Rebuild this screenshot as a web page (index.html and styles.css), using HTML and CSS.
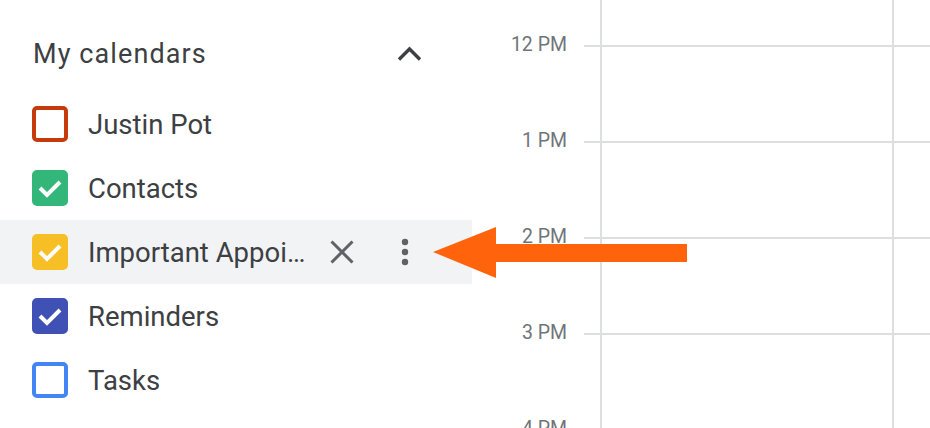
FILE: index.html
```html
<!DOCTYPE html>
<html lang="en">
<head>
  <meta charset="UTF-8" />
  <meta name="viewport" content="width=device-width, initial-scale=1.0"/>
  <title>My calendars</title>
  <link rel="stylesheet" href="styles.css">
</head>
<body>
  <div class="app">
    <aside class="sidebar">
      <div class="section-head">
        <span class="section-title">My calendars</span>
        <button class="icon-btn" aria-label="Collapse">
          <svg width="26" height="16" viewBox="0 0 26 16">
            <polyline points="2,13.5 12.5,3 23,13.5" fill="none" stroke="#3c4043" stroke-width="3.4"/>
          </svg>
        </button>
      </div>

      <ul class="cal-list">
        <li class="cal-item">
          <span class="box" style="border-color:#c53b0b"></span>
          <span class="cal-name">Justin Pot</span>
        </li>
        <li class="cal-item">
          <span class="box checked" style="background:#33b679;border-color:#33b679">
            <svg viewBox="0 0 36 36"><polyline points="8,18 15,25 28,12"/></svg>
          </span>
          <span class="cal-name">Contacts</span>
        </li>
        <li class="cal-item hover">
          <span class="box checked" style="background:#f6bf26;border-color:#f6bf26">
            <svg viewBox="0 0 36 36"><polyline points="8,18 15,25 28,12"/></svg>
          </span>
          <span class="cal-name">Important Appointments</span>
          <button class="icon-btn" aria-label="Unsubscribe">
            <svg width="24" height="24" viewBox="0 0 24 24">
              <path d="M1.5 1.5 L22.5 22.5 M22.5 1.5 L1.5 22.5" stroke="#5f6368" stroke-width="3" fill="none"/>
            </svg>
          </button>
          <button class="icon-btn" aria-label="Options">
            <svg width="8" height="28" viewBox="0 0 8 28">
              <circle cx="4" cy="4" r="3.2" fill="#5f6368"/>
              <circle cx="4" cy="14" r="3.2" fill="#5f6368"/>
              <circle cx="4" cy="24" r="3.2" fill="#5f6368"/>
            </svg>
          </button>
        </li>
        <li class="cal-item">
          <span class="box checked" style="background:#3f51b5;border-color:#3f51b5">
            <svg viewBox="0 0 36 36"><polyline points="8,18 15,25 28,12"/></svg>
          </span>
          <span class="cal-name">Reminders</span>
        </li>
        <li class="cal-item">
          <span class="box" style="border-color:#4285f4"></span>
          <span class="cal-name">Tasks</span>
        </li>
      </ul>
    </aside>

    <main class="calendar">
      <div class="hours">
        <div class="hour"><span class="hour-label">12 PM</span><span class="slot"></span></div>
        <div class="hour"><span class="hour-label">1 PM</span><span class="slot"></span></div>
        <div class="hour"><span class="hour-label">2 PM</span><span class="slot"></span></div>
        <div class="hour"><span class="hour-label">3 PM</span><span class="slot"></span></div>
        <div class="hour"><span class="hour-label">4 PM</span><span class="slot"></span></div>
      </div>
      <div class="days">
        <div class="day"></div>
        <div class="day"></div>
      </div>
    </main>
  </div>

  <!-- annotation arrow -->
  <svg class="arrow" width="256" height="54" viewBox="0 0 256 54">
    <polygon points="1,26 64,1 64,18 255,18 255,36 64,36 64,52" fill="#ff640c"/>
  </svg>
</body>
</html>
```

FILE: styles.css
```css
:root {
  --text: #3c4043;
  --muted: #70757a;
  --icon: #5f6368;
  --line: #dddee0;
  --hover: #f1f3f4;
  --font: Roboto, 'Liberation Sans', sans-serif;
}

* {
  box-sizing: border-box;
}

body {
  margin: 0;
  background: #fff;
  font-family: var(--font);
  color: var(--text);
  overflow: hidden;
  height: 428px;
}

.app {
  display: flex;
  height: 100%;
}

/* sidebar */
.sidebar {
  width: 472px;
  flex-shrink: 0;
  padding-top: 22px;
}

.section-head {
  display: flex;
  align-items: center;
  justify-content: space-between;
  height: 64px;
  padding: 0 38px 0 33px;
  margin-bottom: 6px;
}

.section-title {
  font-size: 27px;
  font-weight: 400;
  letter-spacing: 1.1px;
}

.icon-btn {
  width: 48px;
  height: 48px;
  border: none;
  background: none;
  padding: 0;
  display: flex;
  align-items: center;
  justify-content: center;
  cursor: pointer;
  flex-shrink: 0;
}

.cal-list {
  list-style: none;
  margin: 0;
  padding: 0;
}

.cal-item {
  display: flex;
  align-items: center;
  height: 64px;
  padding: 0 43px 0 32px;
}

.cal-item.hover {
  background: var(--hover);
}

.box {
  width: 36px;
  height: 36px;
  border: 4px solid;
  border-radius: 5px;
  flex-shrink: 0;
  position: relative;
}

.box svg {
  position: absolute;
  top: -4px;
  left: -4px;
  width: 36px;
  height: 36px;
}

.box polyline {
  fill: none;
  stroke: #fff;
  stroke-width: 4;
}

.cal-name {
  flex: 1;
  margin-left: 20px;
  font-size: 27.5px;
  white-space: nowrap;
  overflow: hidden;
  text-overflow: ellipsis;
}

.cal-item.hover .icon-btn + .icon-btn {
  margin-left: 15px;
}

/* day view */
.calendar {
  flex: 1;
  position: relative;
  overflow: hidden;
}

.hours {
  padding-top: 45px;
}

.hour {
  display: flex;
  height: 96px;
}

.hour-label {
  width: 112px;
  padding-right: 17px;
  text-align: right;
  font-size: 19.5px;
  line-height: 24px;
  margin-top: -12px;
  height: 24px;
  color: var(--muted);
}

.slot {
  flex: 1;
  border-top: 2px solid var(--line);
}

.days {
  position: absolute;
  top: 0;
  bottom: 0;
  left: 128px;
  right: 0;
  display: flex;
}

.day {
  width: 292px;
  flex-shrink: 0;
  border-left: 2px solid var(--line);
}

.arrow {
  position: absolute;
  left: 432px;
  top: 226px;
}
```
